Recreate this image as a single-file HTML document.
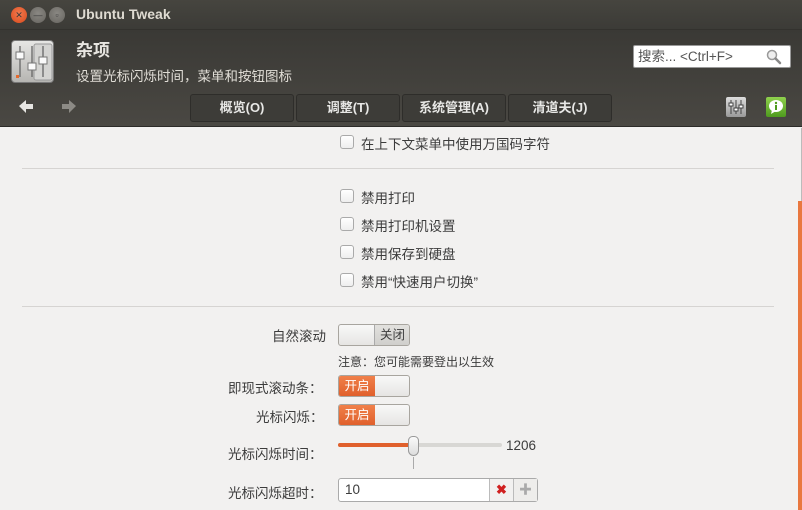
<!DOCTYPE html>
<html><head><meta charset="utf-8"><style>
*{margin:0;padding:0;box-sizing:border-box}
body{width:802px;height:510px;overflow:hidden;background:#f2f1f0;font-family:"Liberation Sans","Noto Sans CJK SC",sans-serif;font-size:13px;color:#3c3c3c;position:relative}
.hdr{position:absolute;left:0;top:0;width:802px;height:127px;background:linear-gradient(#403f3b,#3a3935 30px,#4a4843 127px);border-bottom:1px solid #2c2b28}
.tbar{position:absolute;left:0;top:0;width:802px;height:30px;background:linear-gradient(#46453f,#3c3b37);border-bottom:1px solid #33322e}
.btn{position:absolute;top:7px;width:16px;height:16px;border-radius:50%;font-size:9px;text-align:center;line-height:16px;color:#3a3a3a}
.ab{position:absolute}
.tab{position:absolute;top:94px;height:28px;width:104px;background:#3d3c38;border:1px solid #2e2d2a;border-radius:3px;color:#e8e8e6;font-weight:bold;font-size:13px;text-align:center;line-height:26px}
.cb{position:absolute;width:14px;height:14px;border:1px solid #aaa;border-radius:3px;background:linear-gradient(#fff,#eee)}
.lbl{position:absolute;font-size:13.5px;color:#3c3c3c}
.hr{position:absolute;left:22px;width:752px;height:1px;background:#d6d4d2}
.sw{position:absolute;width:72px;height:22px;border:1px solid #a8a59f;border-radius:3px;overflow:hidden;background:linear-gradient(#f8f8f8,#e6e5e3)}
</style></head><body>
<div class="hdr"></div>
<div class="tbar"></div>
<div class="btn" style="left:11px;background:radial-gradient(circle at 50% 40%,#f27a4f,#d94a1c)">✕</div>
<div class="btn" style="left:30px;background:radial-gradient(circle at 50% 40%,#8a8883,#66645f)">—</div>
<div class="btn" style="left:49px;background:radial-gradient(circle at 50% 40%,#8a8883,#66645f)">▫</div>
<div class="ab" style="left:76px;top:6px;color:#dfdbd2;font-weight:bold;font-size:14px">Ubuntu Tweak</div>
<div class="ab" style="left:11px;top:40px;width:43px;height:43px;border-radius:4px;background:linear-gradient(#e6e6e4,#b6b5b2);border:1px solid #777">
<svg width="43" height="43"><rect x="22" y="3" width="18" height="36" rx="2" fill="#d4d4d2" stroke="#999"/><g stroke="#666" stroke-width="1.3"><line x1="8" y1="5" x2="8" y2="36"/><line x1="20" y1="5" x2="20" y2="36"/><line x1="31" y1="5" x2="31" y2="36"/></g><rect x="4" y="11" width="8" height="7" fill="#fafafa" stroke="#777"/><rect x="16" y="22" width="8" height="7" fill="#fafafa" stroke="#777"/><rect x="27" y="16" width="8" height="7" fill="#fafafa" stroke="#777"/><rect x="4" y="34" width="3" height="3" fill="#e46a2e"/></svg></div>
<div class="ab" style="left:76px;top:36px;color:#e8e6e1;font-size:17px;font-weight:bold">杂项</div>
<div class="ab" style="left:76px;top:65px;color:#e0ddd6;font-size:13.5px">设置光标闪烁时间，菜单和按钮图标</div>
<div class="ab" style="left:633px;top:45px;width:158px;height:23px;background:#fff;border:1px solid #999;border-radius:2px;font-size:13.5px;color:#555;padding-left:4px;line-height:21px">搜索... &lt;Ctrl+F&gt;
<svg style="position:absolute;right:8px;top:3px" width="16" height="16"><circle cx="6" cy="6" r="4.5" fill="#eee" stroke="#999" stroke-width="1.5"/><line x1="9.5" y1="9.5" x2="14" y2="14" stroke="#888" stroke-width="2.5" stroke-linecap="round"/></svg></div>
<svg class="ab" style="left:18px;top:99px" width="60" height="16"><path d="M1 7 L8 1 L8 5 L15 5 L15 10 L8 10 L8 14 Z" fill="#e6e5e2"/><path d="M58 7 L51 1 L51 5 L44 5 L44 10 L51 10 L51 14 Z" fill="#8c8a85"/></svg>
<div class="tab" style="left:190px">概览(O)</div>
<div class="tab" style="left:296px">调整(T)</div>
<div class="tab" style="left:402px">系统管理(A)</div>
<div class="tab" style="left:508px">清道夫(J)</div>
<div class="ab" style="left:726px;top:97px;width:20px;height:20px;border-radius:2px;background:linear-gradient(#ddd,#999)"><svg width="20" height="20" stroke="#444"><line x1="5" y1="3" x2="5" y2="17"/><line x1="10" y1="3" x2="10" y2="17"/><line x1="15" y1="3" x2="15" y2="17"/><rect x="3" y="6" width="4" height="3" fill="#fff"/><rect x="8" y="11" width="4" height="3" fill="#fff"/><rect x="13" y="8" width="4" height="3" fill="#fff"/></svg></div>
<div class="ab" style="left:766px;top:97px;width:20px;height:20px;border-radius:2px;background:linear-gradient(#8fd14d,#4e9a1e)"><svg width="20" height="20"><ellipse cx="10" cy="9" rx="7" ry="6" fill="#fff"/><path d="M6 13 L5 17 L10 14 Z" fill="#fff"/><circle cx="10" cy="6" r="1.2" fill="#4e9a1e"/><rect x="9" y="8" width="2" height="5" fill="#4e9a1e"/></svg></div>

<div class="cb" style="left:340px;top:135px"></div><div class="lbl" style="left:361px;top:133px">在上下文菜单中使用万国码字符</div>
<div class="hr" style="top:168px"></div>
<div class="cb" style="left:340px;top:189px"></div><div class="lbl" style="left:361px;top:187px">禁用打印</div>
<div class="cb" style="left:340px;top:217px"></div><div class="lbl" style="left:361px;top:215px">禁用打印机设置</div>
<div class="cb" style="left:340px;top:245px"></div><div class="lbl" style="left:361px;top:243px">禁用保存到硬盘</div>
<div class="cb" style="left:340px;top:273px"></div><div class="lbl" style="left:361px;top:271px">禁用“快速用户切换”</div>
<div class="hr" style="top:306px"></div>

<div class="lbl" style="left:272px;top:325px">自然滚动</div>
<div class="sw" style="left:338px;top:324px"><div style="position:absolute;left:35px;top:0;width:36px;height:20px;background:linear-gradient(#e2e1de,#d0cfcc);border-left:1px solid #aaa;text-align:center;line-height:20px;font-size:12.5px">关闭</div></div>
<div class="ab" style="left:338px;top:353px;font-size:12px">注意：您可能需要登出以生效</div>
<div class="lbl" style="left:228px;top:377px">即现式滚动条：</div>
<div class="sw" style="left:338px;top:375px"><div style="position:absolute;left:0;top:0;width:36px;height:20px;background:linear-gradient(#f0804a,#e0602c);color:#fff;text-align:center;line-height:20px;font-size:12.5px">开启</div></div>
<div class="lbl" style="left:256px;top:406px">光标闪烁：</div>
<div class="sw" style="left:338px;top:404px"><div style="position:absolute;left:0;top:0;width:36px;height:20px;background:linear-gradient(#f0804a,#e0602c);color:#fff;text-align:center;line-height:20px;font-size:12.5px">开启</div></div>
<div class="lbl" style="left:228px;top:443px">光标闪烁时间：</div>
<div class="ab" style="left:338px;top:443px;width:164px;height:4px;border-radius:2px;background:#d8d7d4"></div>
<div class="ab" style="left:338px;top:443px;width:76px;height:4px;border-radius:2px;background:#e0602c"></div>
<div class="ab" style="left:408px;top:436px;width:11px;height:20px;border:1px solid #999;border-radius:5px 5px 6px 6px;background:linear-gradient(#fafafa,#ddd)"></div>
<div class="ab" style="left:413px;top:457px;width:1px;height:12px;background:#aaa"></div>
<div class="ab" style="left:506px;top:438px;font-size:13.5px">1206</div>
<div class="lbl" style="left:228px;top:482px">光标闪烁超时：</div>
<div class="ab" style="left:338px;top:478px;width:200px;height:24px;border:1px solid #aaa;border-radius:3px;background:#fff">
<span style="position:absolute;left:6px;top:3px;font-size:13.5px">10</span>
<div style="position:absolute;left:150px;top:0;width:24px;height:22px;border-left:1px solid #bbb;background:#f2f1f0;color:#d02020;text-align:center;line-height:22px;font-weight:bold">✖</div>
<div style="position:absolute;left:174px;top:0;width:24px;height:22px;border-left:1px solid #bbb;background:#eeedeb;color:#aaa;text-align:center;line-height:22px;font-weight:bold">✚</div></div>
<div class="ab" style="left:801px;top:128px;width:1px;height:73px;background:#bbb"></div>
<div class="ab" style="left:798px;top:201px;width:4px;height:309px;background:#e9783f"></div>
</body></html>
